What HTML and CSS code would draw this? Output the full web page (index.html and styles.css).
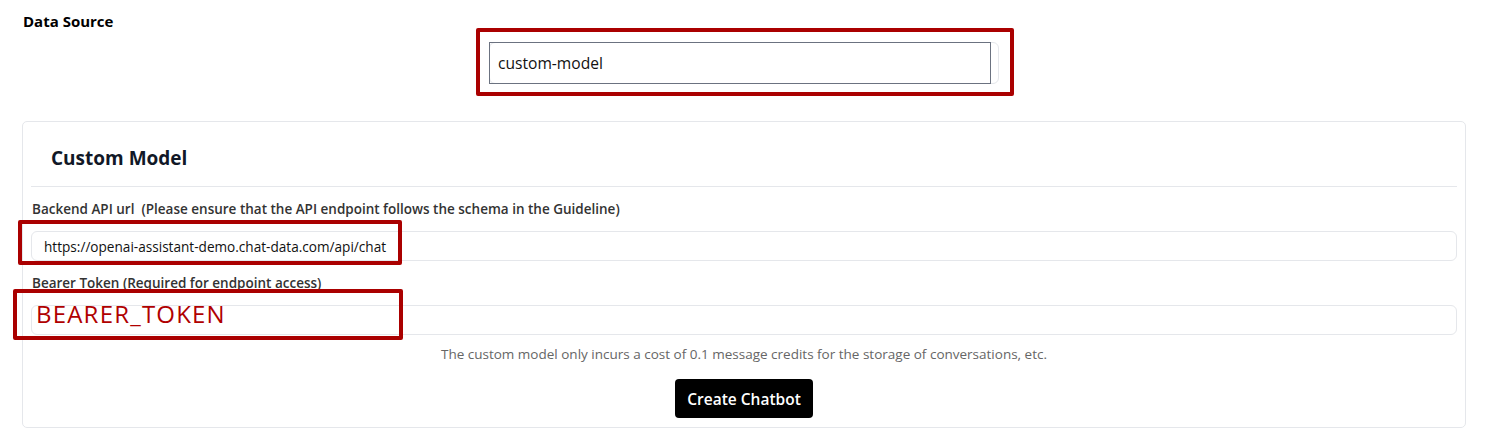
FILE: index.html
```html
<!DOCTYPE html>
<html lang="en">
<head>
<meta charset="utf-8">
<title>Data Source</title>
<link rel="stylesheet" href="styles.css">
</head>
<body>
<div class="page">
  <div class="source">
    <label class="source-label">Data Source</label>
    <div class="select-row">
      <div class="select-wrap">
        <div class="select">custom-model</div>
        <div class="mark mark-select"></div>
      </div>
    </div>
  </div>

  <div class="card">
    <h2 class="card-title">Custom Model</h2>
    <div class="divider"></div>

    <div class="field">
      <label class="field-label">Backend API url&nbsp; (Please ensure that the API endpoint follows the schema in the Guideline)</label>
      <div class="input-wrap">
        <div class="input">https://openai-assistant-demo.chat-data.com/api/chat</div>
        <div class="mark mark-url"></div>
      </div>
    </div>

    <div class="field field-token">
      <label class="field-label">Bearer Token (Required for endpoint access)</label>
      <div class="input-wrap">
        <div class="input"></div>
        <div class="mark mark-token"><span class="mark-text">BEARER_TOKEN</span></div>
      </div>
    </div>

    <p class="note">The custom model only incurs a cost of 0.1 message credits for the storage of conversations, etc.</p>
    <div class="actions">
      <button class="btn">Create Chatbot</button>
    </div>
  </div>
</div>
</body>
</html>
```

FILE: styles.css
```css
* { box-sizing: border-box; }
html, body { margin: 0; padding: 0; background: #ffffff; }
body {
  font-family: "Open Sans", "Noto Sans", "DejaVu Sans", sans-serif;
  color: #111111;
}
.page {
  padding: 11px 24px 0 22px;
}
.source-label {
  display: block;
  padding-left: 1px;
  font-size: 15px;
  font-weight: 700;
  line-height: 20px;
  color: #000;
}
.select-row {
  display: flex;
  justify-content: center;
  margin-top: 11px;
}
.select-wrap {
  position: relative;
  width: 510px;
  height: 42px;
  border: 1px solid #e5e7eb;
  border-radius: 6px;
}
.select {
  width: 502px;
  height: 42px;
  margin: -1px 0 0 -1px;
  border: 1px solid #6b7280;
  padding: 0 8px;
  display: flex;
  align-items: center;
  font-size: 15.6px;
  color: #111;
}
.mark {
  position: absolute;
  border: 4px solid #aa0000;
  border-radius: 2px;
  pointer-events: none;
}
.mark-select {
  left: -14px;
  top: -15px;
  right: -16px;
  bottom: -13px;
}
.card {
  margin-top: 37px;
  border: 1px solid #e5e7eb;
  border-radius: 5px;
  padding: 8px 8px 9px 8px;
}
.card-title {
  margin: 0;
  padding: 15px 20px 0 20px;
  height: 56px;
  font-size: 19px;
  font-weight: 700;
  line-height: 26px;
  color: #111827;
}
.divider {
  height: 1px;
  background: #e5e7eb;
}
.field {
  padding-top: 13px;
}
.field-token { padding-top: 13px; }
.field-label {
  display: block;
  padding-left: 1px;
  font-size: 13.5px;
  font-weight: 600;
  line-height: 18px;
  color: #333333;
}
.input-wrap {
  position: relative;
  margin-top: 13px;
}
.input {
  height: 30px;
  border: 1px solid #e5e7eb;
  border-radius: 6px;
  padding: 0 12px;
  display: flex;
  align-items: center;
  font-size: 13.6px;
  color: #111;
}
.mark-url {
  left: -13px;
  top: -11px;
  width: 384px;
  height: 45px;
}
.mark-token {
  left: -18px;
  top: -16px;
  width: 390px;
  height: 51px;
  display: flex;
  align-items: center;
  padding-left: 19px;
}
.mark-text {
  font-size: 24px;
  color: #b00000;
  letter-spacing: 1.2px;
  margin-top: -2px;
}
.note {
  margin: 10px 0 0 0;
  text-align: center;
  font-size: 13.5px;
  line-height: 18px;
  color: #666666;
}
.actions {
  display: flex;
  justify-content: center;
  margin-top: 16px;
}
.btn {
  background: #000;
  color: #fff;
  border: none;
  border-radius: 4px;
  height: 39px;
  padding: 0 12px;
  font-family: inherit;
  font-size: 15.5px;
  font-weight: 600;
  cursor: pointer;
}
```
